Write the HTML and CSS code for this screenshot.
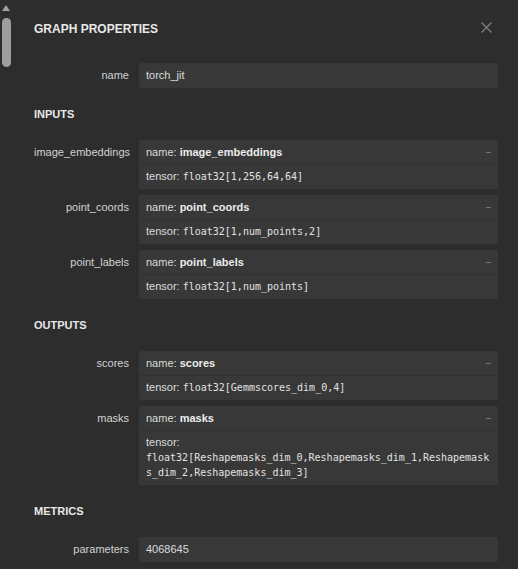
FILE: index.html
```html
<!DOCTYPE html>
<html lang="en">
<head>
<meta charset="utf-8">
<title>Graph Properties</title>
<link rel="stylesheet" href="styles.css">
</head>
<body>
<div class="sidebar">
  <div class="scrollbar">
    <div class="scroll-arrow"></div>
    <div class="scroll-thumb"></div>
  </div>
  <div class="content">
    <div class="title-bar">
      <div class="title">GRAPH PROPERTIES</div>
      <svg class="close" width="11" height="11" viewBox="0 0 11 11"><path d="M0.5 0.5 L10.5 10.5 M10.5 0.5 L0.5 10.5" stroke="#7d7d7d" stroke-width="1.3" fill="none"/></svg>
    </div>

    <div class="item first">
      <div class="item-name">name</div>
      <div class="item-values">
        <div class="value"><div class="line">torch_jit</div></div>
      </div>
    </div>

    <div class="header">INPUTS</div>

    <div class="item">
      <div class="item-name">image_embeddings</div>
      <div class="item-values">
        <div class="value">
          <div class="line"><span class="expander">–</span>name: <b>image_embeddings</b></div>
          <div class="line">tensor: <code>float32[1,256,64,64]</code></div>
        </div>
      </div>
    </div>
    <div class="item">
      <div class="item-name">point_coords</div>
      <div class="item-values">
        <div class="value">
          <div class="line"><span class="expander">–</span>name: <b>point_coords</b></div>
          <div class="line">tensor: <code>float32[1,num_points,2]</code></div>
        </div>
      </div>
    </div>
    <div class="item">
      <div class="item-name">point_labels</div>
      <div class="item-values">
        <div class="value">
          <div class="line"><span class="expander">–</span>name: <b>point_labels</b></div>
          <div class="line">tensor: <code>float32[1,num_points]</code></div>
        </div>
      </div>
    </div>

    <div class="header">OUTPUTS</div>

    <div class="item">
      <div class="item-name">scores</div>
      <div class="item-values">
        <div class="value">
          <div class="line"><span class="expander">–</span>name: <b>scores</b></div>
          <div class="line">tensor: <code>float32[Gemmscores_dim_0,4]</code></div>
        </div>
      </div>
    </div>
    <div class="item">
      <div class="item-name">masks</div>
      <div class="item-values">
        <div class="value">
          <div class="line"><span class="expander">–</span>name: <b>masks</b></div>
          <div class="line">tensor: <code>float32[Reshapemasks_dim_0,Reshapemasks_dim_1,Reshapemasks_dim_2,Reshapemasks_dim_3]</code></div>
        </div>
      </div>
    </div>

    <div class="header">METRICS</div>

    <div class="item">
      <div class="item-name">parameters</div>
      <div class="item-values">
        <div class="value"><div class="line">4068645</div></div>
      </div>
    </div>
  </div>
</div>
</body>
</html>
```
FILE: styles.css
```css
html, body {
  margin: 0;
  padding: 0;
  background: #2d2d2d;
}

body {
  font-family: "Liberation Sans", Arial, sans-serif;
  font-size: 11px;
  color: #dcdcdc;
}

.sidebar {
  display: flex;
  width: 518px;
  height: 569px;
  overflow: hidden;
  background: #2d2d2d;
}

.scrollbar {
  width: 14px;
  flex-shrink: 0;
  display: flex;
  flex-direction: column;
  padding-left: 2px;
  box-sizing: border-box;
}

.scroll-arrow {
  width: 0;
  height: 0;
  margin-top: 5px;
  border-left: 4.5px solid transparent;
  border-right: 4.5px solid transparent;
  border-bottom: 6px solid #a3a3a3;
}

.scroll-thumb {
  margin-top: 7px;
  width: 9px;
  height: 49px;
  border-radius: 4.5px;
  background: #9e9e9e;
}

.content {
  flex: 1;
  padding: 0 20px;
  min-width: 0;
}

.title-bar {
  display: flex;
  justify-content: space-between;
  align-items: flex-start;
  margin-top: 21px;
  height: 16px;
}

.title {
  font-weight: bold;
  font-size: 12px;
  line-height: 16px;
  color: #e8e8e8;
}

.close {
  display: block;
  margin-top: 1px;
  margin-right: 6px;
}

.item {
  display: flex;
}

.item.first {
  margin-top: 23px;
}

.item-name {
  width: 95px;
  flex-shrink: 0;
  padding-right: 5px;
  padding-top: 8px;
  text-align: right;
  line-height: 15px;
  color: #d2d2d2;
  overflow: hidden;
  white-space: nowrap;
}

.item-values {
  flex: 1;
  min-width: 0;
  margin-left: 5px;
}

.value {
  margin: 3px 0;
  background: #383838;
  border: 1px solid #383838;
  border-radius: 2px;
}

.line {
  padding: 4px 6px;
  line-height: 15px;
  color: #dcdcdc;
}

.line + .line {
  border-top: 1px solid #303030;
}

.line b {
  font-weight: bold;
  color: #ececec;
}

.line code {
  font-family: "DejaVu Sans Mono", "Liberation Mono", monospace;
  font-size: 10px;
  line-height: 1;
  white-space: pre-wrap;
  overflow-wrap: break-word;
  color: #e2e2e2;
}

.expander {
  float: right;
  font-size: 9px;
  line-height: 15px;
  color: #8c969e;
}

.header {
  font-weight: bold;
  font-size: 11px;
  line-height: 14px;
  margin: 16px 0;
  color: #e8e8e8;
}
```
